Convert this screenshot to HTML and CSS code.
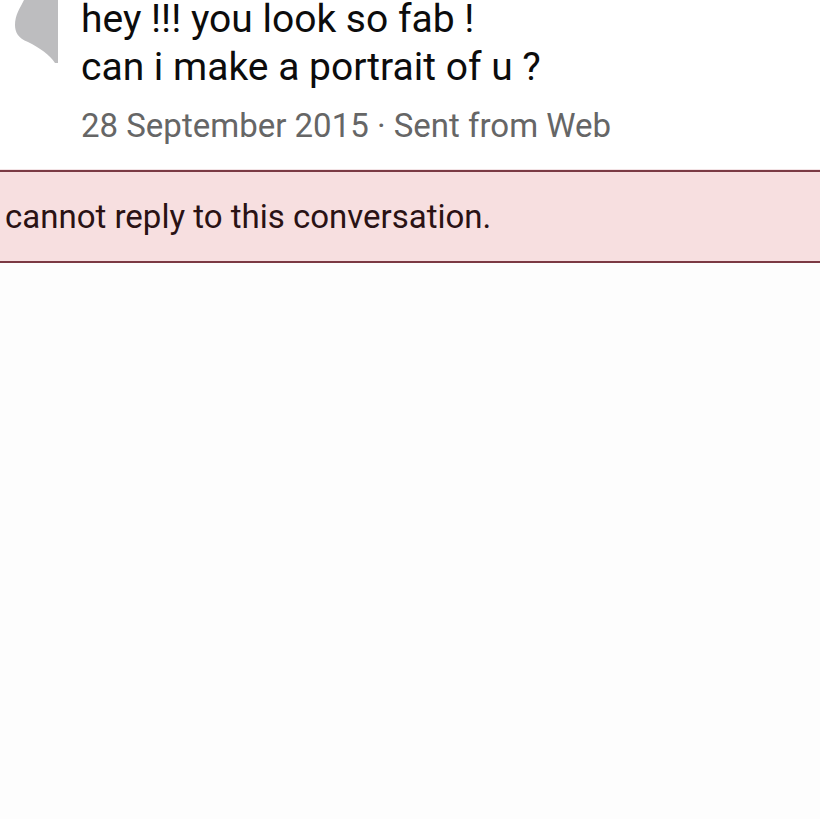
FILE: index.html
```html
<!DOCTYPE html>
<html lang="en">
<head>
    <meta charset="UTF-8">
    <meta name="viewport" content="width=device-width, initial-scale=1.0">
    <title>Conversation</title>
    <link rel="stylesheet" href="styles.css">
</head>
<body>
    <div class="message">
        <div class="avatar">
            <svg width="60" height="64" viewBox="0 0 60 64">
                <path d="M24 0 L58 0 L58 63 L55 63 C50 55 40 48 28 42 C18 38 15 32 15 25 C15 15 20 8 24 0 Z" fill="#bdbdbf"/>
            </svg>
        </div>
        <div class="bubble">
            <p class="text">hey !!! you look so fab !<br>can i make a portrait of u ?</p>
            <p class="meta">28 September 2015 · Sent from Web</p>
        </div>
    </div>

    <div class="notice">cannot reply to this conversation.</div>
</body>
</html>
```

FILE: styles.css
```css
body {
    margin: 0;
    font-family: Roboto, "Liberation Sans", Arial, sans-serif;
    background-color: #fdfdfd;
}
.message {
    display: flex;
    background: #ffffff;
    height: 169px;
    border-bottom: 1px solid #f3e3e5;
}
.avatar {
    width: 81px;
    flex-shrink: 0;
}
.avatar svg {
    display: block;
}
.text {
    margin: -5px 0 0;
    font-size: 39px;
    line-height: 48px;
    color: #0c0c0c;
}
.meta {
    margin: 14px 0 0;
    font-size: 33px;
    line-height: 42px;
    color: #666666;
}
.notice {
    background-color: #f7dfe0;
    border-top: 2px solid #7b3a44;
    border-bottom: 2px solid #7b3a44;
    height: 89px;
    padding-left: 5px;
    font-size: 33px;
    line-height: 89px;
    color: #2a1214;
}
```
